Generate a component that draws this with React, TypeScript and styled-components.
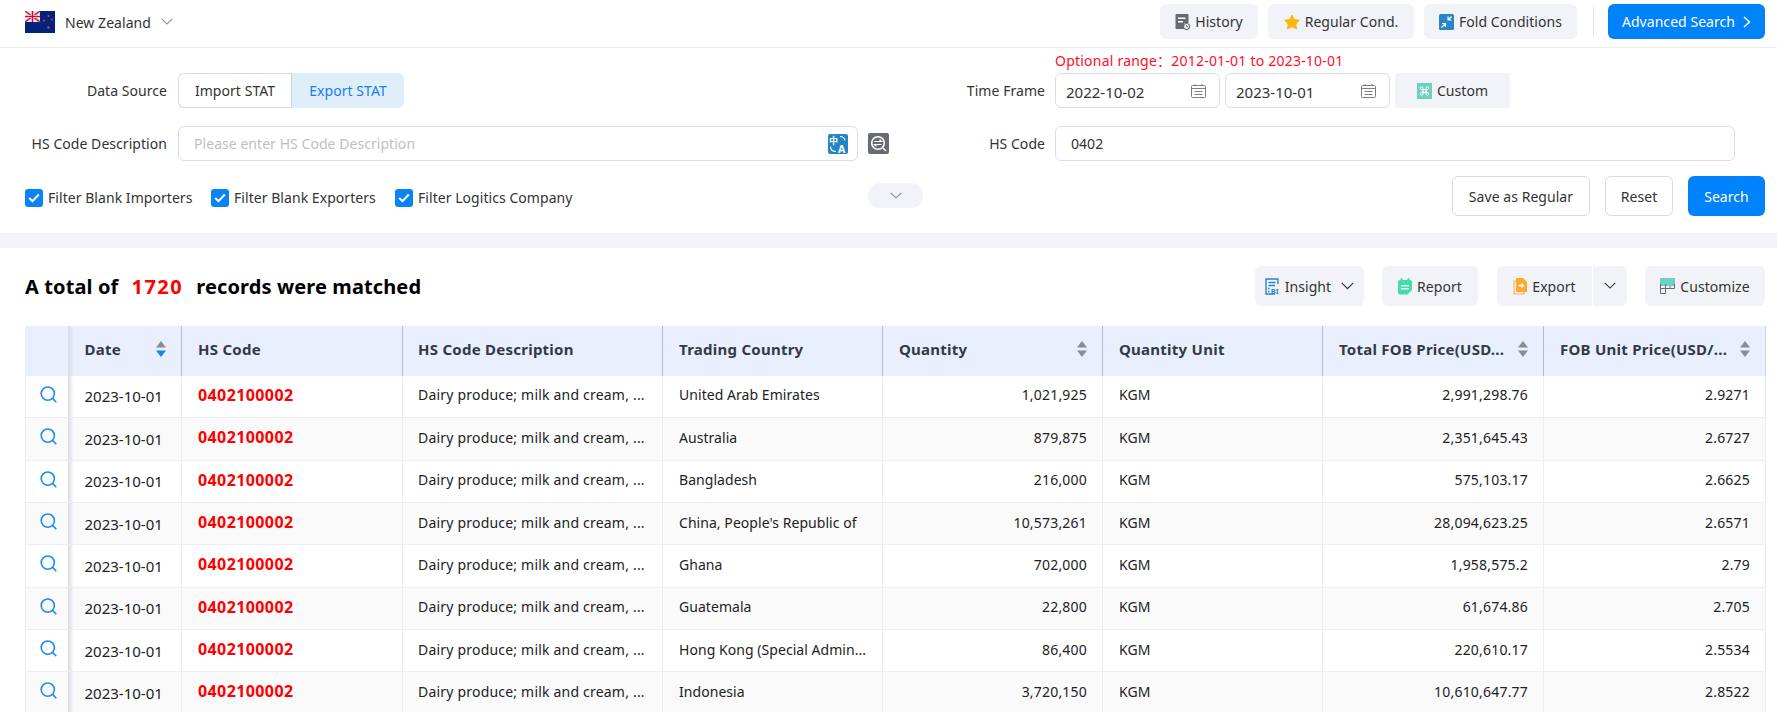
import React from 'react';
import styled, { createGlobalStyle } from 'styled-components';

const Global = createGlobalStyle`
  html, body { margin: 0; padding: 0; height: 712px; overflow: hidden; background: #fff; }
  body { font-family: "Noto Sans", "Noto Sans CJK SC", "Liberation Sans", sans-serif; font-size: 14px; color: #222; letter-spacing: .05px; }
  * { box-sizing: border-box; }
`;

const Page = styled.div`display: flex; flex-direction: column; width: 1777px; height: 712px; overflow: hidden;`;

const TopBar = styled.header`
  height: 48px; flex: none; border-bottom: 1px solid #ebedf0;
  display: flex; align-items: flex-start; justify-content: space-between; padding: 4px 12px 0 25px;
`;
const CountryPicker = styled.div`display: flex; align-items: center; height: 36px; color: #333; gap: 10px; margin-top: 0;`;
const TopActions = styled.div`display: flex; align-items: center; gap: 10px;`;
const SoftButton = styled.div<{ $w: number; $h?: number; $r?: number }>`
  width: ${p => p.$w}px; height: ${p => p.$h ?? 35}px; border-radius: ${p => p.$r ?? 6}px; background: #f1f3f8;
  display: flex; align-items: center; justify-content: center; gap: 5px; color: #333; white-space: nowrap; flex: none;
`;
const Divider = styled.div`width: 1px; height: 29px; background: #e3e5ea; margin: 0 4px 0 6px;`;
const PrimaryButton = styled.div<{ $w: number; $h: number }>`
  width: ${p => p.$w}px; height: ${p => p.$h}px; border-radius: 6px; background: #0082fa; color: #fff;
  display: flex; align-items: center; justify-content: center; gap: 8px; white-space: nowrap; flex: none;
`;
const OutlineButton = styled.div<{ $w: number }>`
  width: ${p => p.$w}px; height: 40px; border-radius: 6px; border: 1px solid #d9dbe0; background: #fff; color: #333;
  display: flex; align-items: center; justify-content: center; white-space: nowrap; flex: none;
`;

const Filters = styled.section`height: 185px; flex: none; display: flex; flex-direction: column; padding-right: 12px;`;
const RangeNote = styled.div`height: 25px; line-height: 25px; padding-left: 1055px; color: #ff0f1f; white-space: nowrap; letter-spacing: .22px;`;
const FormRow = styled.div`display: flex; height: 35px; margin-bottom: 18px; &:nth-child(3) { margin-bottom: 15px; }`;
const LeftPart = styled.div`width: 889px; flex: none; display: flex; align-items: center;`;
const RightPart = styled.div`flex: 1; display: flex; align-items: center; gap: 4px;`;
const Label = styled.label<{ $w: number; $gap?: number }>`
  width: ${p => p.$w}px; flex: none; text-align: right; color: #333; white-space: nowrap; margin-right: ${p => p.$gap ?? 11}px;
`;
const Segmented = styled.div`display: flex; height: 35px;`;
const SegOff = styled.div`
  width: 114px; border: 1px solid #d9dbe0; border-right-color: #c3d5e2; border-radius: 6px 0 0 6px;
  display: flex; align-items: center; justify-content: center; color: #333;
`;
const SegOn = styled.div`
  width: 112px; background: #dfeffa; border-radius: 0 6px 6px 0; color: #1a7cf2;
  display: flex; align-items: center; justify-content: center;
`;
const InputWrap = styled.div<{ $w: number }>`
  position: relative; width: ${p => p.$w}px; height: 35px; flex: none; border: 1px solid #dcdee2; border-radius: 6px;
  display: flex; align-items: center; justify-content: space-between; padding: 0 13px 0 15px;
`;
const TextInput = styled.input`
  border: 0; outline: 0; flex: 1; min-width: 0; padding: 0; font: inherit; letter-spacing: inherit; color: #333; background: transparent;
  &::placeholder { color: #bdbfc4; opacity: 1; }
`;
const DateBox = styled(InputWrap)<{ $ml?: number }>`
  padding: 0 13px 0 10px; margin-left: ${p => p.$ml ?? 0}px;
  & > span { margin-top: 2px; color: #333; font-size: 15px; letter-spacing: 0; }
`;
const SwapWrap = styled.div`margin-left: 10px; display: flex;`;
const CustomBtn = styled(SoftButton)`border-radius: 2px; margin-left: 1px;`;

const ActionRow = styled.div`display: flex; align-items: center; height: 40px;`;
const Checks = styled.div`width: 868px; flex: none; display: flex; align-items: center; padding: 2px 0 0 25px;`;
const Check = styled.div<{ $w: number }>`width: ${p => p.$w}px; flex: none; display: flex; align-items: center; gap: 5px; color: #333; white-space: nowrap;`;
const CheckBox = styled.span`
  width: 18px; height: 18px; margin-top: 2px; border-radius: 3px; background: #0a84f5; display: flex; align-items: center; justify-content: center;
`;
const Pill = styled.div`width: 55px; height: 25px; border-radius: 12px; background: #f1f3f8; display: flex; align-items: center; justify-content: center; margin-top: -1px;`;
const Actions = styled.div`margin-left: auto; display: flex; gap: 15px;`;

const Band = styled.div`height: 15px; flex: none; background: #f2f4f9;`;

const Results = styled.section`padding: 18px 12px 0 25px; flex: 1; min-height: 0;`;
const ResultsHead = styled.div`display: flex; align-items: center; justify-content: space-between; height: 40px; margin-bottom: 20px;`;
const Title = styled.h2`margin: 0; font-size: 20px; font-weight: 700; color: #000; display: flex; gap: 13px; white-space: nowrap; letter-spacing: .12px;`;
const Count = styled.span`color: #ff0000; letter-spacing: 1.5px;`;
const Tools = styled.div`display: flex; align-items: center; gap: 18px;`;
const SplitBtn = styled.div`display: flex; gap: 1px; flex: none; margin-left: 1px;`;
const SplitMain = styled(SoftButton)`border-radius: 6px 0 0 6px;`;
const SplitEnd = styled(SoftButton)`border-radius: 0 6px 6px 0;`;
const TrailingChevron = styled.span`display: flex; margin-left: 5px;`;

const Table = styled.table`width: 1740px; table-layout: fixed; border-collapse: collapse; border-left: 1px solid #eceef2;`;
const Th = styled.th<{ $w: number; $pad?: number }>`
  position: relative; width: ${p => p.$w}px; height: 49.5px; padding: 0 15px 0 ${p => p.$pad ?? 16}px; background: #e9effd; text-align: left;
  font-weight: 700; font-size: 15px; letter-spacing: .25px; color: #333a45; border-right: 1px solid #b5bacb; white-space: nowrap;
  &:first-child { padding: 0; border-right: 0; }
  &:last-child { border-right: 1px solid #cfd4e2; }
`;
const ThInner = styled.div`display: flex; align-items: center; justify-content: space-between; gap: 6px; margin-bottom: 3px;`;
const Shadow = styled.span`
  position: absolute; top: 0; bottom: 0; right: -6px; width: 6px;
  background: linear-gradient(to right, #d9dce6, rgba(217, 220, 230, 0)); pointer-events: none; z-index: 1;
`;
const Tr = styled.tr`
  height: 42.33px;
  &:nth-child(even) td { background: #fafafa; }
`;
const Td = styled.td<{ $right?: boolean }>`
  position: relative; padding: 0 15px 3px 16px; border-right: 1px solid #eceef2; border-bottom: 1px solid #eceef2;
  text-align: ${p => (p.$right ? 'right' : 'left')}; color: #222; white-space: nowrap; overflow: visible;
  letter-spacing: ${p => (p.$right ? '.2px' : '.05px')};
`;
const IconCell = styled(Td)`padding: 0 0 0 14px; border-right: 0;`;
const DateCell = styled(Td)`padding: 0 15px 0 17px; font-size: 15px; letter-spacing: 0;`;
const CodeCell = styled(Td)`color: #ff0000; font-weight: 700; font-size: 16px; letter-spacing: .4px;`;
const DescCell = styled(Td)`padding-left: 15px; letter-spacing: .2px;`;

const Chevron = ({ color = '#8a8d94', w = 12 }: { color?: string; w?: number }) => (
  <svg width={w} height={w * 0.6} viewBox="0 0 12 7" fill="none"><path d="M0.7 0.7 L6 6 L11.3 0.7" stroke={color} strokeWidth="1.1" /></svg>
);

const Flag = () => (
  <svg width="30" height="22" viewBox="0 0 30 22">
    <rect width="30" height="22" fill="#00247d" />
    <rect width="15" height="11" fill="#e9e6ee" />
    <path d="M0 0L15 11M15 0L0 11" stroke="#c8324a" strokeWidth="1.6" />
    <path d="M7.5 0V11M0 5.5H15" stroke="#fff" strokeWidth="3" />
    <path d="M7.5 0V11M0 5.5H15" stroke="#c8102e" strokeWidth="1.7" />
    <g fill="#e5324c">
      <circle cx="23.5" cy="5" r="1.1" /><circle cx="19" cy="9.5" r="1.1" /><circle cx="27" cy="8.5" r="1" /><circle cx="23.5" cy="16.5" r="1.3" />
    </g>
  </svg>
);
const HistoryIcon = () => (
  <svg width="15" height="16" viewBox="0 0 15 16">
    <path d="M1.5 0H12.5A1 1 0 0 1 13.5 1V9H9V15H1.5A1 1 0 0 1 .5 14V1A1 1 0 0 1 1.5 0Z" fill="#676a73" />
    <rect x="3" y="3.5" width="7.5" height="1.5" fill="#fff" /><rect x="3" y="7" width="5" height="1.5" fill="#fff" />
    <circle cx="11.5" cy="12.5" r="3" fill="#fff" stroke="#676a73" strokeWidth="1.2" />
    <path d="M11.5 11V12.7H13" stroke="#676a73" strokeWidth=".9" fill="none" />
  </svg>
);
const StarIcon = () => (
  <svg width="16" height="16" viewBox="0 0 24 24"><path d="M12 1.5l3.4 6.9 7.6 1.1-5.5 5.4 1.3 7.6-6.8-3.6-6.8 3.6 1.3-7.6L1 9.5l7.6-1.1z" fill="#fdb40d" stroke="#fdb40d" strokeWidth="1.5" strokeLinejoin="round" /></svg>
);
const FoldIcon = () => (
  <svg width="15" height="16" viewBox="0 0 15 16">
    <rect width="15" height="16" rx="1.5" fill="#2a86c4" />
    <path d="M2.5 13.5L6 10M3 9.5H6.5V13M12.5 2.5L9 6M9 2.5V6H12.5" stroke="#fff" strokeWidth="1.2" fill="none" />
  </svg>
);
const CustomIcon = () => (
  <svg width="15" height="16" viewBox="0 0 15 16">
    <rect width="15" height="16" fill="#6fcfc2" />
    <path d="M6 6.5H9V9.5H6ZM6 6.5H4.5A1.4 1.4 0 1 1 6 5V11A1.4 1.4 0 1 1 4.5 9.5H10.5A1.4 1.4 0 1 1 9 11V5A1.4 1.4 0 1 1 10.5 6.5H6" stroke="#fff" strokeWidth=".9" fill="none" />
  </svg>
);
const CalendarIcon = () => (
  <svg width="15" height="14" viewBox="0 0 15 14" fill="none" stroke="#7d7f85" strokeWidth="1">
    <rect x=".5" y="1.5" width="14" height="12" rx="1" />
    <path d="M.5 4.5H14.5M4 0V2M11 0V2M3.5 7.5H11.5M3.5 10.5H11.5" />
  </svg>
);
const TranslateSvg = styled.svg`position: absolute; right: 9px; top: 7px;`;
const TranslateIcon = () => (
  <TranslateSvg width="20" height="20" viewBox="0 0 20 20">
    <rect width="20" height="20" rx="2" fill="#2385c2" />
    <text x="1" y="10" fontSize="9" fontWeight="700" fill="#fff" fontFamily="Noto Sans CJK SC, sans-serif">中</text>
    <text x="10" y="18.5" fontSize="10.5" fontWeight="700" fill="#fff" fontFamily="Noto Sans, sans-serif">A</text>
    <path d="M12 2.5C15 2.5 16.5 3.5 17 6.5M2.5 12.5C2.5 16 4 17.5 8 17.5" stroke="#fff" strokeWidth="1.2" fill="none" />
  </TranslateSvg>
);
const SwapSearchIcon = () => (
  <svg width="21" height="21" viewBox="0 0 21 21">
    <rect width="21" height="21" rx="2" fill="#696b73" />
    <circle cx="10" cy="10" r="6.3" fill="none" stroke="#fff" strokeWidth="1.6" />
    <path d="M15 15L18 18" stroke="#fff" strokeWidth="1.6" />
    <path d="M6.5 8.5H13.5L11.5 6.8M13.5 11.5H6.5L8.5 13.2" stroke="#fff" strokeWidth="1.2" fill="none" />
  </svg>
);
const CheckMark = () => (
  <svg width="12" height="10" viewBox="0 0 12 10"><path d="M1.2 5L4.5 8.2L10.8 1.5" stroke="#fff" strokeWidth="2" fill="none" /></svg>
);
const InsightIcon = () => (
  <svg width="15" height="17" viewBox="0 0 15 17" fill="none">
    <path d="M10 16H1V1H13V6" stroke="#2a86c4" strokeWidth="1.4" />
    <path d="M3.5 4.5H10.5M3.5 7.5H10" stroke="#2a86c4" strokeWidth="1.4" />
    <path d="M3 10.5H4.5M3 13.5H4.5" stroke="#2a86c4" strokeWidth="1.4" />
    <text x="5.8" y="15.8" fontSize="7.5" fontWeight="700" fill="#2a86c4" fontFamily="Noto Sans, sans-serif">BI</text>
  </svg>
);
const ReportIcon = () => (
  <svg width="14" height="17" viewBox="0 0 14 17">
    <path d="M2 2H12A2 2 0 0 1 14 4V12L9.5 16.5H2A2 2 0 0 1 0 14.5V4A2 2 0 0 1 2 2Z" fill="#41dfa6" />
    <rect x="2.5" y="0" width="2" height="4" rx="1" fill="#41dfa6" /><rect x="9.5" y="0" width="2" height="4" rx="1" fill="#41dfa6" />
    <rect x="3" y="7" width="8" height="1.4" fill="#fff" /><rect x="3" y="10" width="8" height="1.4" fill="#fff" />
  </svg>
);
const ExportIcon = () => (
  <svg width="14" height="17" viewBox="0 0 14 17">
    <path d="M3 3H1V16H11V14" stroke="#fdb24a" strokeWidth="1.2" fill="none" />
    <path d="M3 0H10L14 4V14H3Z" fill="#fda92a" />
    <path d="M5.5 7.5H10.5M8.5 5.5L10.5 7.5L8.5 9.5" stroke="#fff" strokeWidth="1.3" fill="none" />
  </svg>
);
const CustomizeIcon = () => (
  <svg width="15" height="16" viewBox="0 0 15 16">
    <rect width="15" height="8" fill="#6fcfc2" />
    <path d="M.5 6V15.5H5.5V6M.5 10.5H14.5V6M5.5 8V10.5M10 8V10.5" stroke="#666a73" strokeWidth="1" fill="none" />
  </svg>
);
const SearchGlyph = () => (
  <svg width="17" height="17" viewBox="0 0 17 17" fill="none" stroke="#1c8cf5" strokeWidth="1.6">
    <circle cx="7.8" cy="7.6" r="6.6" /><path d="M12.6 12.4L16.3 16.3" />
  </svg>
);
const SortSvg = styled.svg`flex: none;`;
const Sort = ({ active }: { active?: boolean }) => (
  <SortSvg width="10" height="16" viewBox="0 0 10 16">
    <path d="M5 0L10 6.5H0Z" fill="#8b8d94" />
    <path d="M5 16L10 9.5H0Z" fill={active ? '#1484f8' : '#8b8d94'} />
  </SortSvg>
);

const columns: { label: string; w: number; pad?: number; sort?: boolean; active?: boolean }[] = [
  { label: 'Date', w: 114, pad: 17, sort: true, active: true },
  { label: 'HS Code', w: 221 },
  { label: 'HS Code Description', w: 260, pad: 15 },
  { label: 'Trading Country', w: 220 },
  { label: 'Quantity', w: 220, sort: true },
  { label: 'Quantity Unit', w: 220 },
  { label: 'Total FOB Price(USD...', w: 221, sort: true },
  { label: 'FOB Unit Price(USD/...', w: 222, sort: true },
];

const rows = [
  ['United Arab Emirates', '1,021,925', '2,991,298.76', '2.9271'],
  ['Australia', '879,875', '2,351,645.43', '2.6727'],
  ['Bangladesh', '216,000', '575,103.17', '2.6625'],
  ["China, People's Republic of", '10,573,261', '28,094,623.25', '2.6571'],
  ['Ghana', '702,000', '1,958,575.2', '2.79'],
  ['Guatemala', '22,800', '61,674.86', '2.705'],
  ['Hong Kong (Special Admin...', '86,400', '220,610.17', '2.5534'],
  ['Indonesia', '3,720,150', '10,610,647.77', '2.8522'],
];

export default function App() {
  return (
    <Page>
      <Global />
      <TopBar>
        <CountryPicker><Flag />New Zealand<Chevron /></CountryPicker>
        <TopActions>
          <SoftButton $w={98}><HistoryIcon />History</SoftButton>
          <SoftButton $w={146}><StarIcon />Regular Cond.</SoftButton>
          <SoftButton $w={153}><FoldIcon />Fold Conditions</SoftButton>
          <Divider />
          <PrimaryButton $w={157} $h={35}>Advanced Search<svg width="8" height="12" viewBox="0 0 8 12" fill="none"><path d="M1 1L6.5 6L1 11" stroke="#fff" strokeWidth="1.5" /></svg></PrimaryButton>
        </TopActions>
      </TopBar>
      <Filters>
        <RangeNote>Optional range：2012-01-01 to 2023-10-01</RangeNote>
        <FormRow>
          <LeftPart>
            <Label $w={167}>Data Source</Label>
            <Segmented><SegOff>Import STAT</SegOff><SegOn>Export STAT</SegOn></Segmented>
          </LeftPart>
          <RightPart>
            <Label $w={156} $gap={6}>Time Frame</Label>
            <DateBox $w={165}><span>2022-10-02</span><CalendarIcon /></DateBox>
            <DateBox $w={165} $ml={1}><span>2023-10-01</span><CalendarIcon /></DateBox>
            <CustomBtn $w={115}><CustomIcon />Custom</CustomBtn>
          </RightPart>
        </FormRow>
        <FormRow>
          <LeftPart>
            <Label $w={167}>HS Code Description</Label>
            <InputWrap $w={680}>
              <TextInput placeholder="Please enter HS Code Description" readOnly />
              <TranslateIcon />
            </InputWrap>
            <SwapWrap><SwapSearchIcon /></SwapWrap>
          </LeftPart>
          <RightPart>
            <Label $w={156} $gap={6}>HS Code</Label>
            <InputWrap $w={680}><TextInput defaultValue="0402" readOnly /></InputWrap>
          </RightPart>
        </FormRow>
        <ActionRow>
          <Checks>
            <Check $w={186}><CheckBox><CheckMark /></CheckBox>Filter Blank Importers</Check>
            <Check $w={184}><CheckBox><CheckMark /></CheckBox>Filter Blank Exporters</Check>
            <Check $w={180}><CheckBox><CheckMark /></CheckBox>Filter Logitics Company</Check>
          </Checks>
          <Pill><Chevron /></Pill>
          <Actions>
            <OutlineButton $w={138}>Save as Regular</OutlineButton>
            <OutlineButton $w={68}>Reset</OutlineButton>
            <PrimaryButton $w={77} $h={40}>Search</PrimaryButton>
          </Actions>
        </ActionRow>
      </Filters>
      <Band />
      <Results>
        <ResultsHead>
          <Title><span>A total of</span><Count>1720</Count><span>records were matched</span></Title>
          <Tools>
            <SoftButton $w={109} $h={40}><InsightIcon />Insight<TrailingChevron><Chevron color="#333" w={13} /></TrailingChevron></SoftButton>
            <SoftButton $w={96} $h={40}><ReportIcon />Report</SoftButton>
            <SplitBtn>
              <SplitMain $w={95} $h={40}><ExportIcon />Export</SplitMain>
              <SplitEnd $w={34} $h={40}><Chevron color="#333" /></SplitEnd>
            </SplitBtn>
            <SoftButton $w={120} $h={40}><CustomizeIcon />Customize</SoftButton>
          </Tools>
        </ResultsHead>
        <Table>
          <thead>
            <tr>
              <Th $w={42}><Shadow /></Th>
              {columns.map(c => (
                <Th key={c.label} $w={c.w} $pad={c.pad}>
                  <ThInner><span>{c.label}</span>{c.sort && <Sort active={c.active} />}</ThInner>
                </Th>
              ))}
            </tr>
          </thead>
          <tbody>
            {rows.map(r => (
              <Tr key={r[0]}>
                <IconCell><SearchGlyph /><Shadow /></IconCell>
                <DateCell>2023-10-01</DateCell>
                <CodeCell>0402100002</CodeCell>
                <DescCell>Dairy produce; milk and cream, ...</DescCell>
                <Td>{r[0]}</Td>
                <Td $right>{r[1]}</Td>
                <Td>KGM</Td>
                <Td $right>{r[2]}</Td>
                <Td $right>{r[3]}</Td>
              </Tr>
            ))}
          </tbody>
        </Table>
      </Results>
    </Page>
  );
}
